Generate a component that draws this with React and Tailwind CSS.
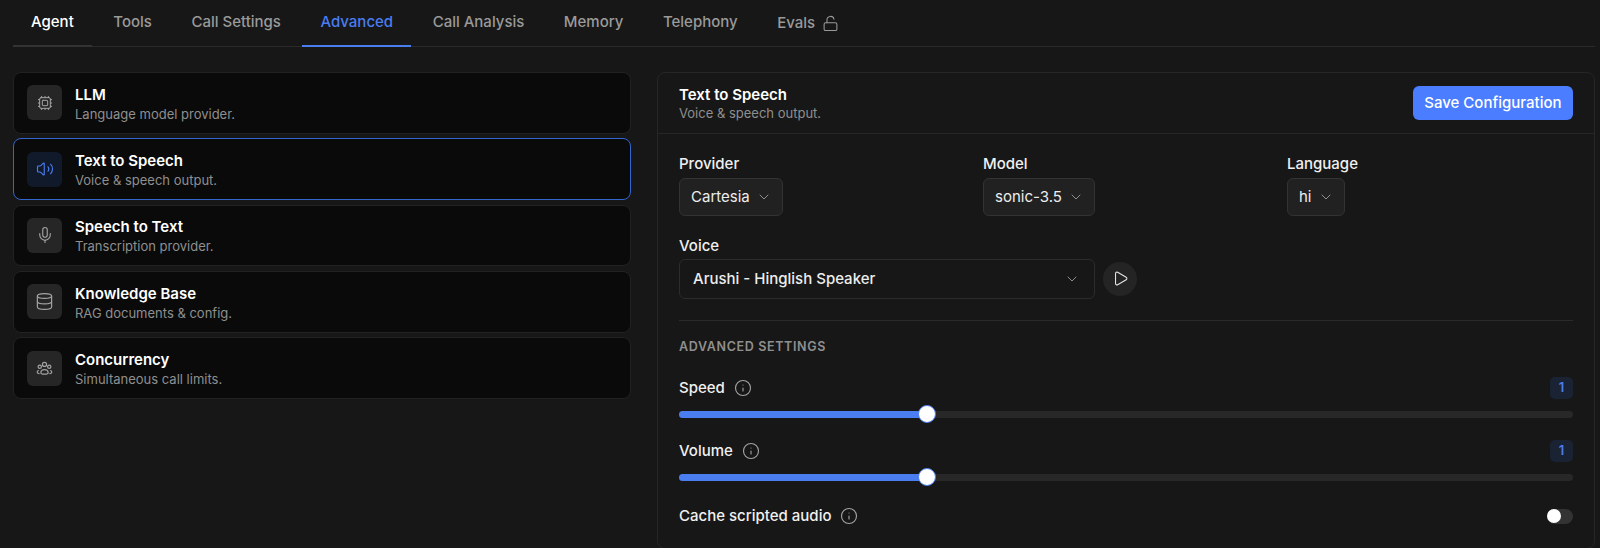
import React from "react";
import { Cpu, Volume2, Mic, Database, LockOpen, Play, ChevronDown, Info } from "lucide-react";

const tabs = ["Agent", "Tools", "Call Settings", "Advanced", "Call Analysis", "Memory", "Telephony"];

function GroupIcon({ size = 20, strokeWidth = 1.5 }) {
  return (
    <svg width={size} height={size} viewBox="0 0 24 24" fill="none" stroke="currentColor" strokeWidth={strokeWidth} strokeLinecap="round" strokeLinejoin="round">
      <circle cx="12" cy="6.8" r="2.6" />
      <circle cx="6" cy="9.8" r="2.1" />
      <circle cx="18" cy="9.8" r="2.1" />
      <path d="M7.4 17.3c0-2.6 2-3.9 4.6-3.9s4.6 1.3 4.6 3.9c0 1.3-2 1.9-4.6 1.9s-4.6-.6-4.6-1.9z" />
      <path d="M4.2 14.6c-.9.5-1.4 1.2-1.4 2 0 .9.9 1.6 2.4 1.9" />
      <path d="M19.8 14.6c.9.5 1.4 1.2 1.4 2 0 .9-.9 1.6-2.4 1.9" />
    </svg>
  );
}

const items = [
  { title: "LLM", desc: "Language model provider.", Icon: Cpu, size: 16 },
  { title: "Text to Speech", desc: "Voice & speech output.", Icon: Volume2, size: 18, active: true },
  { title: "Speech to Text", desc: "Transcription provider.", Icon: Mic, size: 18 },
  { title: "Knowledge Base", desc: "RAG documents & config.", Icon: Database, size: 19 },
  { title: "Concurrency", desc: "Simultaneous call limits.", Icon: GroupIcon, size: 19 },
];

function Tab({ label }) {
  const cls =
    label === "Agent"
      ? "text-white border-[#333333]"
      : label === "Advanced"
        ? "text-[#4a7df0] border-[#4a7df0]"
        : "text-[#9a9a9a] border-transparent";
  return (
    <div className={`h-[47px] -mb-px flex items-center px-[18px] text-[15px] font-medium border-b-2 ${cls}`}>
      {label}
    </div>
  );
}

function Card({ title, desc, Icon, active, size }) {
  return (
    <div
      className={`h-[61.5px] flex items-center gap-[13px] px-[13px] rounded-[8px] border bg-[#0a0a0a] ${
        active ? "border-[#3366cc]" : "border-[#222222]"
      }`}
    >
      <div
        className={`w-[35px] h-[35px] rounded-[6px] flex items-center justify-center ${
          active ? "bg-[#111a2b] text-[#4a7df0]" : "bg-[#262626] text-[#a3a3a3]"
        }`}
      >
        <Icon size={size} strokeWidth={1.5} />
      </div>
      <div className="flex flex-col pt-[2px]">
        <div className="text-[15px] leading-[20px] font-semibold text-white">{title}</div>
        <div className="text-[13px] leading-[18px] text-[#8f8f8f]">{desc}</div>
      </div>
    </div>
  );
}

function Select({ label, value }) {
  return (
    <div>
      <div className="text-[15px] leading-[20px] font-medium text-[#f0f0f0] mb-[3.7px]">{label}</div>
      <div className="inline-flex items-center h-[38.5px] gap-[6px] pl-[11px] pr-[10px] rounded-[6px] border border-[#333333] bg-[#212121] text-[15px] text-[#ededed]">
        {value}
        <ChevronDown size={16} strokeWidth={1.5} className="text-[#8f8f8f]" />
      </div>
    </div>
  );
}

function SliderRow({ label, value }) {
  return (
    <div>
      <div className="flex items-center justify-between h-[22px]">
        <div className="flex items-center gap-[9px] text-[15px] font-medium text-[#f0f0f0]">
          {label}
          <Info size={18} strokeWidth={1.5} className="text-[#a3a3a3]" />
        </div>
        <div className="w-[23px] h-[22px] rounded-[5px] bg-[#1a2333] text-[#4a7df0] text-[13px] font-semibold flex items-center justify-center">
          {value}
        </div>
      </div>
      <div className="relative mt-[11.5px] h-[7px] rounded-full bg-[#282828]">
        <div className="h-full w-[27.7%] rounded-full bg-[#4a7df0]" />
        <div className="absolute left-[27.7%] top-1/2 -translate-x-1/2 -translate-y-1/2 w-[18px] h-[18px] rounded-full bg-white border border-[#4a7df0]" />
      </div>
    </div>
  );
}

export default function App() {
  return (
    <div className="h-[548px] overflow-hidden bg-[#171717] font-['Inter',sans-serif] text-white">
      <div className="mx-[13px] mr-[5px] flex gap-[3.5px] border-b border-[#2a2a2a]">
        {tabs.map((t) => (
          <Tab key={t} label={t} />
        ))}
        <div className="h-[46px] flex items-center gap-[7px] px-[18px] text-[15px] font-medium text-[#9a9a9a]">
          Evals
          <LockOpen size={17} strokeWidth={1.5} />
        </div>
      </div>

      <div className="flex gap-[26px] pl-[13px] pr-[5px] pt-[25px]">
        <div className="w-[618px] flex flex-col gap-[4.85px]">
          {items.map((it) => (
            <Card key={it.title} {...it} />
          ))}
        </div>

        <div className="w-[938px] h-[477px] rounded-[8px] border border-[#262626] bg-[#171717]">
          <div className="h-[61px] flex items-center justify-between px-[21px] border-b border-[#262626]">
            <div className="pt-[1px]">
              <div className="text-[15px] leading-[19px] font-semibold text-white">Text to Speech</div>
              <div className="text-[13px] leading-[18px] text-[#8f8f8f]">Voice & speech output.</div>
            </div>
            <button className="h-[34px] px-[11.5px] rounded-[6px] bg-[#4a7dff] text-[15px] font-medium text-white">
              Save Configuration
            </button>
          </div>

          <div className="px-[21px] pt-[20px]">
            <div className="grid grid-cols-3 gap-x-[18px]">
              <Select label="Provider" value="Cartesia" />
              <Select label="Model" value="sonic-3.5" />
              <Select label="Language" value="hi" />
            </div>

            <div className="mt-[20px] text-[15px] leading-[20px] font-medium text-[#f0f0f0] mb-[3px]">Voice</div>
            <div className="flex items-center gap-[8px]">
              <div className="w-[416px] h-[39.5px] flex items-center justify-between pl-[13px] pr-[14px] rounded-[6px] border border-[#2c2c2c] bg-[#171717] text-[15px] font-medium text-[#ededed]">
                Arushi - Hinglish Speaker
                <ChevronDown size={16} strokeWidth={1.5} className="text-[#8f8f8f]" />
              </div>
              <div className="w-[34px] h-[34px] rounded-full bg-[#242424] flex items-center justify-center text-[#e5e5e5]">
                <Play size={17} strokeWidth={1.5} />
              </div>
            </div>

            <div className="mt-[21.5px] border-t border-[#2a2a2a]" />
            <div className="mt-[17px] text-[12.5px] leading-[18px] font-semibold tracking-[0.65px] text-[#8f8f8f]">ADVANCED SETTINGS</div>

            <div className="mt-[21px] flex flex-col gap-[22.5px]">
              <SliderRow label="Speed" value="1" />
              <SliderRow label="Volume" value="1" />
            </div>

            <div className="mt-[24.5px] flex items-center justify-between h-[22px]">
              <div className="flex items-center gap-[9px] text-[15px] font-medium text-[#f0f0f0]">
                Cache scripted audio
                <Info size={18} strokeWidth={1.5} className="text-[#a3a3a3]" />
              </div>
              <div className="w-[26px] h-[15px] rounded-full bg-[#333333] flex items-center">
                <div className="w-[14px] h-[14px] rounded-full bg-white" />
              </div>
            </div>
          </div>
        </div>
      </div>
    </div>
  );
}
